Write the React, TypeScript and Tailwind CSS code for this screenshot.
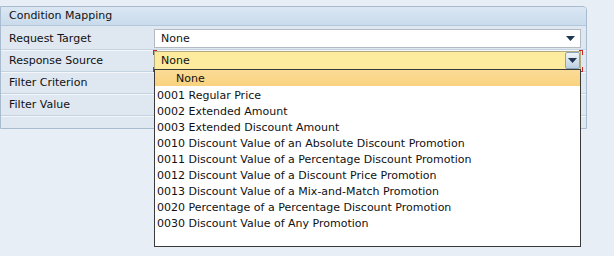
import React from 'react';

const items = [
  '0001 Regular Price',
  '0002 Extended Amount',
  '0003 Extended Discount Amount',
  '0010 Discount Value of an Absolute Discount Promotion',
  '0011 Discount Value of a Percentage Discount Promotion',
  '0012 Discount Value of a Discount Price Promotion',
  '0013 Discount Value of a Mix-and-Match Promotion',
  '0020 Percentage of a Percentage Discount Promotion',
  '0030 Discount Value of Any Promotion',
];

function Caret() {
  return (
    <svg width="9" height="5" viewBox="0 0 9 5">
      <path d="M0 0 H9 L4.5 5 Z" fill="#1f3550" />
    </svg>
  );
}

function Row({ label, children }: { label: string; children?: React.ReactNode }) {
  return (
    <div className="flex h-[22px] items-center border-b border-[#c5d2df] shadow-[0_1px_0_#f3f7fb]">
      <div className="w-[153px] shrink-0 pl-[8px] pt-[2px]">{label}</div>
      {children}
    </div>
  );
}

export default function App() {
  return (
    <div
      className="relative h-[256px] w-[614px] overflow-hidden bg-[#e8eef5] text-[11px] text-[#111]"
      style={{ fontFamily: '"DejaVu Sans", Verdana, sans-serif' }}
    >
      <div className="w-[587px] pt-[6px]">
        <div className="h-[123px] rounded-tr-[4px] border border-[#a8bbcf] bg-[#dfe7f0]">
          {/* Header */}
          <div className="flex h-[19px] items-center rounded-tr-[3px] border-b border-[#b4c6d9] bg-gradient-to-b from-[#dbe7f3] to-[#c9dbec] pl-[8px] pt-[1px]">
            Condition Mapping
          </div>

          <div className="pt-[2px]">
            <Row label="Request Target">
              <div className="flex h-[19px] w-[427px] items-center justify-between border border-[#b3bac3] bg-white pl-[6px] pr-[5px]">
                <span className="pt-[2px]">None</span>
                <Caret />
              </div>
            </Row>
            <Row label="Response Source">
              <div className="relative flex h-[19px] w-[427px] items-center justify-between border border-[#b5ab80] bg-[#fdeb9e] pl-[6px]">
                <span className="pt-[2px]">None</span>
                <div className="flex h-[17px] w-[15px] items-center justify-center rounded-[2px] border border-[#8fa3b8] bg-gradient-to-b from-[#eef3f8] to-[#bccfe1]">
                  <Caret />
                </div>
                {/* focus brackets */}
                <div className="absolute left-[-2px] top-[-2px] h-[5px] w-[4px] border-l border-t border-[#c8282c]" />
                <div className="absolute right-[-3px] top-[-2px] h-[5px] w-[4px] border-r border-t border-[#c8282c]" />
                <div className="absolute bottom-[-3px] left-[-2px] h-[5px] w-[4px] border-b border-l border-[#c8282c]" />
                <div className="absolute bottom-[-3px] right-[-3px] h-[5px] w-[4px] border-b border-r border-[#c8282c]" />
              </div>
            </Row>
            <Row label="Filter Criterion" />
            <Row label="Filter Value" />
          </div>
        </div>
      </div>

      {/* Dropdown list */}
      <div className="absolute left-[154px] top-[69px] h-[178px] w-[427px] border border-[#3a3a3a] bg-white">
        <div className="flex h-[16px] items-center bg-gradient-to-b from-[#fbdc96] to-[#f8d27e] pl-[21px] pt-[3px]">
          None
        </div>
        {items.map((it) => (
          <div key={it} className="flex h-[16px] items-center whitespace-pre pl-[2px] pt-[4px]">
            {it}
          </div>
        ))}
      </div>
    </div>
  );
}
